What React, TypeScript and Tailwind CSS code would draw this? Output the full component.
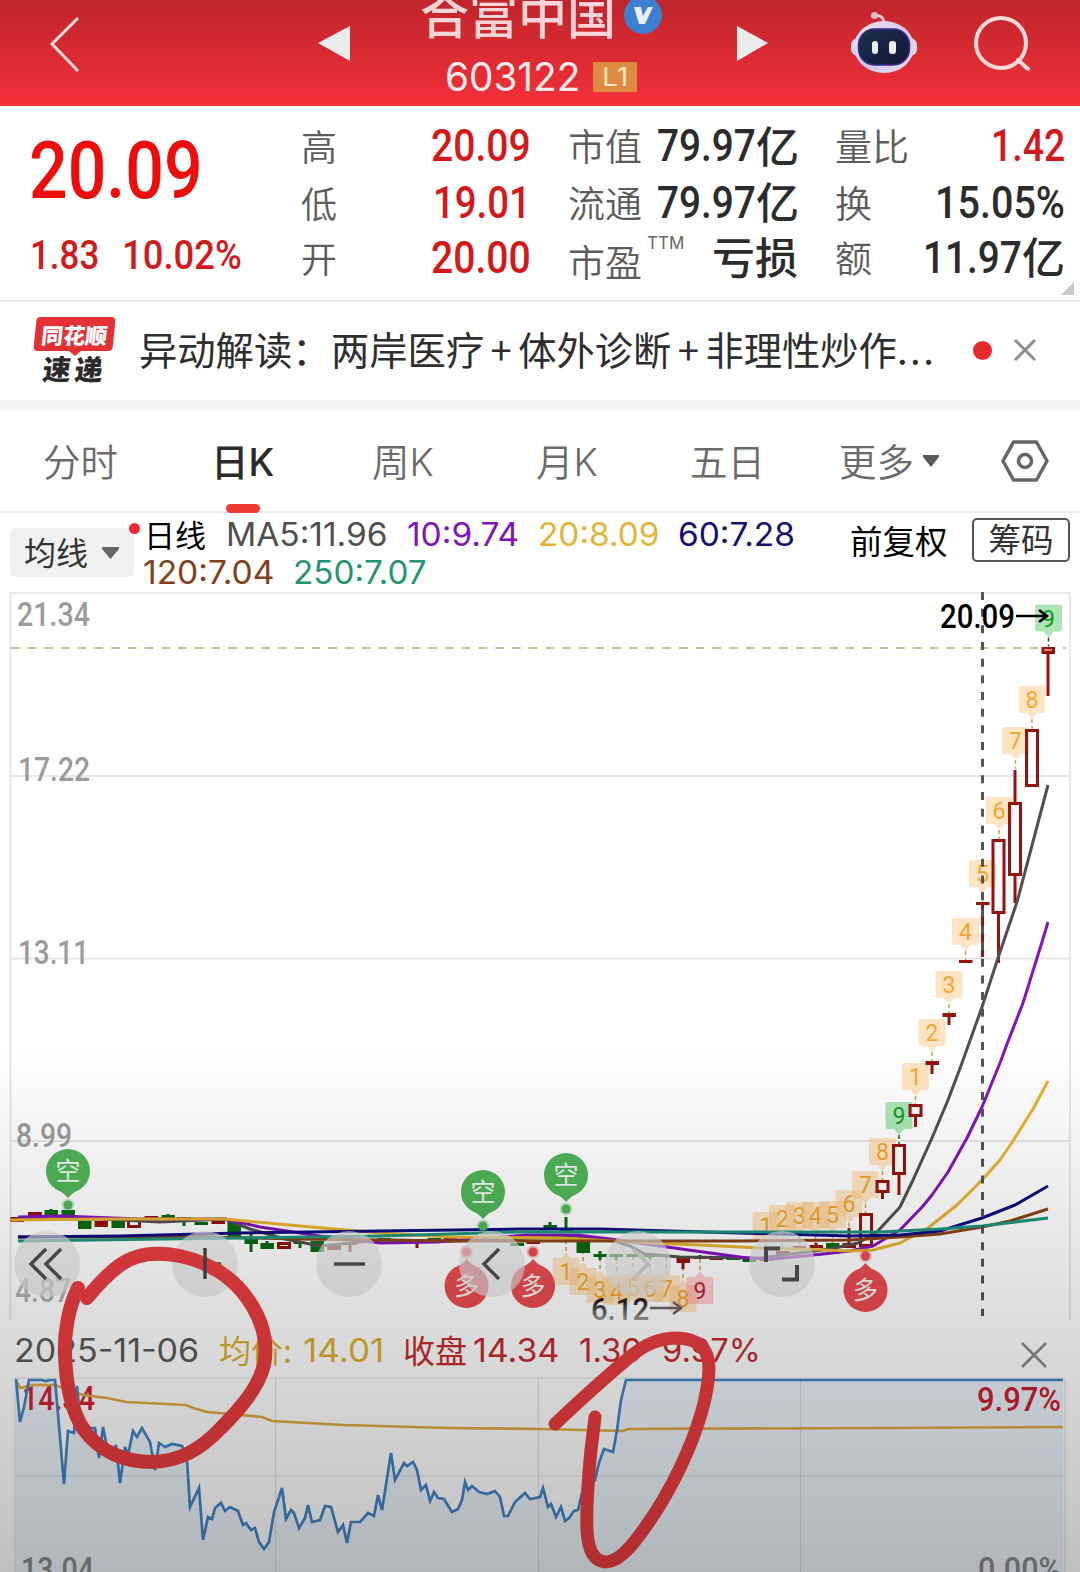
import { useLayoutEffect, useRef, type ReactNode } from "react";

interface FitProps {
  className: string;
  children: ReactNode;
}

// Condenses or stretches its text so that it fills the width of the box
function Fit({ className, children }: FitProps) {
  const box = useRef<HTMLSpanElement>(null);
  const text = useRef<HTMLSpanElement>(null);

  useLayoutEffect(() => {
    if (!box.current || !text.current) return;
    const scale = box.current.clientWidth / text.current.offsetWidth;
    text.current.style.transform = `scaleX(${scale})`;
  }, []);

  return (
    <span ref={box} className={`block shrink-0 whitespace-nowrap ${className}`}>
      <span ref={text} className="inline-block origin-left">
        {children}
      </span>
    </span>
  );
}

const RED = "#96130f";
const GREEN = "#076a10";

function Header() {
  return (
    <header className="flex h-[106px] shrink-0 overflow-hidden bg-linear-to-b from-[#bf252c] to-[#f4303a]">
      <svg className="mt-[16px] ml-[47px] h-[58px] w-[36px] shrink-0" viewBox="0 0 36 58" fill="none" stroke="#fbdcdc" strokeWidth="3">
        <path d="M31 2L5 28l26 27" />
      </svg>
      <svg className="mt-[26px] ml-[235px] h-[35px] w-[33px] shrink-0" viewBox="0 0 33 35" fill="#ececec">
        <path d="M32 0v35L0 17z" />
      </svg>
      <div className="ml-[69px] flex w-[244px] shrink-0 flex-col">
        <div className="flex h-[58px]">
          <Fit className="-mt-[13px] h-[52px] w-[196px] text-[49px] leading-[52px] font-medium text-[#f9d3d6]">合富中国</Fit>
          <svg className="-mt-[5px] ml-[7px] h-[40px] w-[40px]" viewBox="0 0 40 40">
            <circle cx="20" cy="20" r="19" fill="#3e7fd2" />
            <path d="M11 12h7l2 9 5-9h5l-8 17h-6z" fill="#e9efe9" />
          </svg>
        </div>
        <div className="ml-[25px] flex items-center">
          <Fit className="h-[38px] w-[135px] font-['Inter'] text-[39px] leading-[38px] text-[#fdebec]">603122</Fit>
          <div className="ml-[13px] flex h-[30px] w-[44px] items-center justify-center bg-[#de8b40]">
            <Fit className="h-[26px] w-[26px] font-['Inter'] text-[25px] leading-[27px] text-[#f8e6c8]">L1</Fit>
          </div>
        </div>
      </div>
      <svg className="mt-[26px] ml-[73px] h-[35px] w-[32px] shrink-0" viewBox="0 0 32 35" fill="#ececec">
        <path d="M0 0v35l31-18z" />
      </svg>
      <svg className="mt-[10px] ml-[80px] h-[64px] w-[70px] shrink-0" viewBox="0 0 70 64">
        <defs>
          <linearGradient id="robot" x1="0" y1="0" x2="1" y2="1">
            <stop offset="0" stopColor="#f1e6ec" />
            <stop offset="0.55" stopColor="#d4c6ee" />
            <stop offset="1" stopColor="#efdcf3" />
          </linearGradient>
          <linearGradient id="visor" x1="0" y1="0" x2="1" y2="1">
            <stop offset="0" stopColor="#1d2f50" />
            <stop offset="1" stopColor="#141737" />
          </linearGradient>
        </defs>
        <path d="M25 5.500q10-1 10 8" fill="none" stroke="#f0c6ce" strokeWidth="3" />
        <circle cx="25.500" cy="5.500" r="3.500" fill="#f3b9c3" />
        <rect x="2" y="28" width="66" height="18" rx="7" fill="#efd9e6" />
        <ellipse cx="35" cy="37" rx="30" ry="26" fill="url(#robot)" />
        <rect x="9.500" y="19" width="51" height="36" rx="16" fill="url(#visor)" stroke="#3a2a8c" strokeWidth="1.500" />
        <rect x="23" y="31" width="6" height="13" rx="3" fill="#eceff5" />
        <rect x="40" y="31" width="7" height="13" rx="3" fill="#eceff5" />
      </svg>
      <svg className="mt-[14px] ml-[52px] h-[60px] w-[60px] shrink-0" viewBox="0 0 60 60" fill="none" stroke="#fbd9da" strokeWidth="4" strokeLinecap="round">
        <circle cx="30" cy="29" r="25" />
        <path d="M47 46l10 9" />
      </svg>
    </header>
  );
}

function Quote() {
  return (
    <section className="flex h-[194px] shrink-0 bg-white font-['Roboto','Noto_Sans_CJK_SC',sans-serif] font-medium">
      <div className="w-[301px] shrink-0 pl-[29px] text-[#ee0d0d]">
        <Fit className="mt-[25px] h-[80px] w-[174px] text-[79px] leading-[80px]">20.09</Fit>
        <div className="mt-[17px] flex text-[#d01a1c]">
          <Fit className="ml-px h-[54px] w-[69px] text-[41px] leading-[55px]">1.83</Fit>
          <Fit className="ml-[23px] h-[54px] w-[120px] text-[41px] leading-[55px]">10.02%</Fit>
        </div>
      </div>
      <div className="flex w-[230px] shrink-0 flex-col pt-[12px] text-[45px] text-[#d2191b]">
        <div className="flex h-[57px] items-center justify-between">
          <span className="mt-[5px] text-[36px] font-[350] text-[#5c5c5c]">高</span>
          <Fit className="h-[57px] w-[100px] leading-[56px]">20.09</Fit>
        </div>
        <div className="flex h-[57px] items-center justify-between">
          <span className="mt-[5px] text-[36px] font-[350] text-[#5c5c5c]">低</span>
          <Fit className="h-[57px] w-[98px] leading-[55px]">19.01</Fit>
        </div>
        <div className="flex h-[55px] items-center justify-between">
          <span className="mt-[3px] text-[36px] font-[350] text-[#5c5c5c]">开</span>
          <Fit className="h-[55px] w-[100px] leading-[52px]">20.00</Fit>
        </div>
      </div>
      <div className="ml-[37px] flex w-[232px] shrink-0 flex-col pt-[12px] text-[45px] text-[#2c2c2c]">
        <div className="flex h-[57px] items-center">
          <span className="mt-[5px] text-[37px] font-[350] text-[#5c5c5c]">市值</span>
          <Fit className="ml-[15px] h-[57px] w-[99px] leading-[56px]">79.97</Fit>
          <span className="mt-[3px] text-[43px]">亿</span>
        </div>
        <div className="flex h-[57px] items-center">
          <span className="mt-[5px] text-[37px] font-[350] text-[#5c5c5c]">流通</span>
          <Fit className="ml-[15px] h-[57px] w-[99px] leading-[55px]">79.97</Fit>
          <span className="mt-[2px] text-[43px]">亿</span>
        </div>
        <div className="flex h-[55px] items-center">
          <span className="mt-[11px] text-[37px] font-[350] text-[#5c5c5c]">市盈</span>
          <Fit className="-mt-[34px] ml-[5px] h-[18px] w-[37px] font-['Inter'] text-[17px] leading-[18px] font-normal text-[#666]">TTM</Fit>
          <span className="ml-[28px] text-[43px]">亏损</span>
        </div>
      </div>
      <div className="ml-[35px] flex w-[230px] shrink-0 flex-col pt-[12px] text-[45px] text-[#2c2c2c]">
        <div className="flex h-[57px] items-center justify-between">
          <span className="mt-[5px] text-[37px] font-[350] text-[#5c5c5c]">量比</span>
          <Fit className="h-[57px] w-[74px] leading-[56px] text-[#d2191b]">1.42</Fit>
        </div>
        <div className="flex h-[57px] items-center justify-between">
          <span className="mt-[5px] text-[37px] font-[350] text-[#5c5c5c]">换</span>
          <Fit className="h-[57px] w-[130px] leading-[55px]">15.05%</Fit>
        </div>
        <div className="flex h-[55px] items-center">
          <span className="mt-[3px] text-[37px] font-[350] text-[#5c5c5c]">额</span>
          <Fit className="ml-[51px] h-[55px] w-[99px] leading-[52px]">11.97</Fit>
          <span className="text-[43px]">亿</span>
        </div>
      </div>
      <svg className="-ml-[4px] mb-[4px] h-[14px] w-[14px] shrink-0 self-end" viewBox="0 0 14 14">
        <path d="M13 0v13H0z" fill="#c9c9c9" />
      </svg>
    </section>
  );
}

function News() {
  return (
    <section className="flex h-[111px] shrink-0 items-start border-t-2 border-b-11 border-t-[#ececec] border-b-[#f4f4f4] bg-white">
      <div className="mt-[15px] ml-[35px] flex w-[82px] shrink-0 flex-col">
        <div className="flex h-[34px] w-[79px] -skew-x-6 items-center justify-center rounded-[4px] bg-[#e43136]">
          <span className="text-[22px] leading-none font-black text-white">同花顺</span>
        </div>
        <svg className="ml-[34px] h-[5px] w-[12px]" viewBox="0 0 12 5" fill="#e43136">
          <path d="M0 0h12L6 5z" />
        </svg>
        <span className="ml-[8px] -skew-x-6 text-[28px] leading-[24px] font-black tracking-[4px] text-[#2b2b2b]">速递</span>
      </div>
      <div className="mt-[19px] ml-[22px] flex w-[821px] shrink-0 text-[38.3px] leading-[56px] text-[#2e2e2e]">
        <span className="w-[192px]">异动解读：</span>
        <span>两岸医疗</span>
        <span className="w-[34px] text-center">+</span>
        <span>体外诊断</span>
        <span className="w-[34px] text-center">+</span>
        <span>非理性炒作</span>
        <span className="tracking-[2.500px]">...</span>
      </div>
      <span className="mt-[39px] ml-[13px] h-[19px] w-[19px] shrink-0 rounded-full bg-[#e82a2c]" />
      <svg className="mt-[36px] ml-[21px] h-[24px] w-[24px] shrink-0" viewBox="0 0 24 24" stroke="#8c8c8c" strokeWidth="3">
        <path d="M2 2l20 20M22 2L2 22" />
      </svg>
    </section>
  );
}

function Tabs() {
  return (
    <nav className="flex h-[102px] shrink-0 items-start border-b-2 border-[#ececec] bg-white text-[37.500px] leading-[54px] text-[#6a6a6a] [&>*]:shrink-0">
      <span className="mt-[22px] ml-[43px] w-[168px] font-[350]">分时</span>
      <div className="mt-[22px] w-[161px] font-medium text-[#2b2b2b]">
        日<span className="font-['Inter','Noto_Sans_CJK_SC']">K</span>
        <div className="mt-[14px] ml-[15px] h-[9px] w-[34px] rounded-full bg-[#ef3a33]" />
      </div>
      <span className="mt-[22px] w-[164px] font-[350]">周<span className="font-['Inter']">K</span></span>
      <span className="mt-[22px] w-[154px] font-[350]">月<span className="font-['Inter']">K</span></span>
      <span className="mt-[22px] w-[149px] font-[350]">五日</span>
      <span className="mt-[22px] w-[83px] font-[350]">更多</span>
      <svg className="mt-[43px] h-[13px] w-[18px]" viewBox="0 0 18 13" fill="#595959">
        <path d="M1 1h16v2L9 13 1 3z" />
      </svg>
      <svg className="mt-[28px] ml-[60px] h-[44px] w-[50px]" viewBox="0 0 50 44" fill="none" stroke="#666" strokeWidth="3.500" strokeLinejoin="round">
        <path d="M13.500 3h23L47 22 36.500 41h-23L3 22z" />
        <circle cx="25" cy="22" r="6.500" />
      </svg>
    </nav>
  );
}

function Averages() {
  return (
    <section className="flex h-[79px] shrink-0 items-start bg-white [&>*]:shrink-0">
      <div className="relative mt-[15px] ml-[10px] flex h-[49px] w-[124px] items-center rounded-[5px] bg-[#f1f1f1] pb-[3px] pl-[14px] text-[32px] text-[#333]">
        均线
        <svg className="mt-[3px] ml-[14px] h-[12px] w-[17px]" viewBox="0 0 17 12" fill="#666">
          <path d="M0 0h17v2L8.500 12 0 2z" />
        </svg>
        <span className="absolute -top-[5px] -right-[6px] h-[11px] w-[11px] rounded-full bg-[#ee2836]" />
      </div>
      <div className="ml-[9px] w-[706px] font-['Inter'] text-[32px]">
        <div className="flex h-[40px] pt-[2px] leading-[39px]">
          <span className="ml-[1px] font-['Noto_Sans_CJK_SC'] text-[31px] leading-[37px] text-black">日线</span>
          <Fit className="ml-[20px] w-[161px] text-[#4f4f4f]">MA5:11.96</Fit>
          <Fit className="ml-[20px] w-[112px] text-[#7f14b8]">10:9.74</Fit>
          <Fit className="ml-[19px] w-[121px] text-[#e3b33a]">20:8.09</Fit>
          <Fit className="ml-[19px] w-[117px] text-[#14106e]">60:7.28</Fit>
        </div>
        <div className="flex leading-[39px]">
          <Fit className="w-[131px] text-[#80401a]">120:7.04</Fit>
          <Fit className="ml-[19px] w-[134px] text-[#269373]">250:7.07</Fit>
        </div>
      </div>
      <span className="mt-[3px] ml-[1px] w-[122px] text-[32.500px] leading-[47px] text-black">前复权</span>
      <div className="mt-[5px] flex h-[44px] w-[98px] items-center justify-center rounded-[5px] border-2 border-[#555] pb-[3px] text-[32.500px] text-[#333]">筹码</div>
    </section>
  );
}

// [center x, top y, label, kind]
const tags: [number, number, string, string][] = [
  [766, 1212, "1", "o"], [782.5, 1205, "2", "o"], [799.5, 1202, "3", "o"], [815.5, 1202, "4", "o"],
  [832.5, 1201, "5", "o"], [849, 1190, "6", "o"], [865.5, 1171, "7", "o"], [882.5, 1138, "8", "o"],
  [899, 1102, "9", "g"], [915.5, 1063, "1", "o"], [932, 1019, "2", "o"], [949, 971, "3", "o"],
  [965.5, 918, "4", "o"], [982.5, 860, "5", "o"], [999, 797, "6", "o"], [1015.5, 727, "7", "o"],
  [1032, 686, "8", "o"], [1048.5, 604.5, "9", "g"],
];

const lowTags: [number, number, string, string][] = [
  [566, 1258, "1", "o"], [583, 1268, "2", "o"], [600, 1276, "3", "o"], [616.5, 1278, "4", "o"],
  [633, 1274, "5", "o"], [650, 1275, "6", "o"], [666.5, 1275, "7", "o"], [683, 1285, "8", "o"],
  [700, 1277, "9", "r"],
];

const tagFill: Record<string, string> = { o: "#ffc47c", g: "#4cc75f", r: "#ff8f96" };
const tagText: Record<string, string> = { o: "#f3a62e", g: "#109a1e", r: "#c31f3c" };

function Tag({ tag, up }: { tag: [number, number, string, string]; up?: boolean }) {
  const [x, y, label, kind] = tag;
  const tip = up
    ? `M${x - 5} ${y}L${x} ${y - 6}L${x + 5} ${y}z`
    : `M${x - 5} ${y + 27}L${x} ${y + 33}L${x + 5} ${y + 27}z`;
  return (
    <g>
      <g fill={tagFill[kind]} fillOpacity={0.46}>
        <rect x={x - 13.5} y={y} width="27" height="27" rx="2" />
        <path d={tip} />
      </g>
      <path
        d={up ? `M${x} ${y - 7}v-14` : `M${x} ${y + 33}v9`}
        stroke={kind === "g" ? GREEN : "#cf9c55"}
        strokeWidth="1.5"
        strokeDasharray="4 3"
      />
      <text x={x} y={y + 22} textAnchor="middle" fontSize="23" fontFamily="Roboto" fill={tagText[kind]}>
        {label}
      </text>
    </g>
  );
}

// [center x, body top, body bottom, wick top, wick bottom, kind] - h is a hollow rising body
const candles: [number, number, number, number, number, string][] = [
  [17, 1217, 1222, 1217, 1222, "r"], [35, 1212, 1218, 1212, 1218, "h"], [51, 1210, 1217, 1209, 1217, "g"],
  [68, 1210, 1218, 1210, 1218, "g"], [84.5, 1221, 1229, 1221, 1229, "g"], [101, 1221, 1227, 1221, 1227, "r"],
  [118, 1221, 1228, 1221, 1228, "g"], [134, 1218, 1228, 1218, 1228, "h"], [151, 1216, 1219, 1216, 1219, "r"],
  [168, 1215, 1218, 1214, 1218, "g"], [184, 1217, 1219, 1217, 1226, "g"], [201, 1222, 1225, 1222, 1225, "g"],
  [218, 1221, 1224, 1221, 1224, "r"], [234, 1219, 1237, 1219, 1237, "g"], [251, 1239, 1244, 1233, 1252, "g"],
  [267, 1243, 1249, 1241, 1249, "g"], [284, 1242, 1249, 1242, 1249, "h"], [300, 1242, 1244, 1242, 1248, "g"],
  [317, 1241, 1252, 1241, 1252, "g"], [334, 1244, 1250, 1244, 1250, "h"], [350, 1243, 1245, 1243, 1252, "r"],
  [384, 1238, 1241, 1238, 1241, "g"], [417, 1239, 1241, 1239, 1248, "r"], [434, 1238, 1241, 1238, 1241, "g"],
  [450, 1237, 1241, 1237, 1241, "r"], [467, 1239, 1242, 1239, 1242, "g"], [517, 1243, 1246, 1243, 1246, "g"],
  [533, 1240, 1244, 1240, 1244, "r"], [550, 1225, 1229, 1222, 1229, "g"], [566, 1229, 1231, 1217, 1231, "g"],
  [583, 1236, 1253, 1236, 1253, "g"], [600, 1254, 1257, 1251, 1260, "g"], [616, 1254, 1257, 1254, 1260, "g"],
  [633, 1254, 1257, 1254, 1257, "g"], [650, 1254, 1257, 1254, 1259, "g"], [666, 1255, 1257, 1255, 1257, "r"],
  [683, 1257, 1263, 1257, 1269, "r"], [700, 1256, 1259, 1255, 1259, "g"], [716, 1258, 1260, 1258, 1260, "r"],
  [733, 1258, 1260, 1258, 1260, "g"], [749, 1259, 1262, 1259, 1262, "g"], [766, 1257, 1261, 1257, 1261, "r"],
  [783, 1251, 1255, 1251, 1255, "h"], [799, 1246, 1249, 1246, 1249, "r"], [816, 1245, 1248, 1243, 1248, "r"],
  [832.5, 1243, 1248, 1243, 1248, "g"], [849, 1243, 1248, 1228, 1248, "r"], [866, 1213, 1247, 1213, 1247, "h"],
  [882.5, 1180, 1193, 1180, 1199, "h"], [899, 1144, 1175, 1144, 1195, "h"], [915.5, 1104, 1117, 1104, 1127, "h"],
  [932, 1061, 1065, 1061, 1074, "r"], [949, 1013, 1017, 1013, 1025, "r"], [965.5, 960, 963, 960, 963, "r"],
  [982.5, 902, 905, 902, 957, "r"], [998.5, 839, 914, 839, 963, "h"], [1015, 802, 876, 770, 903, "h"],
  [1032, 729, 787, 729, 787, "h"], [1048, 647, 654, 647, 696, "r"],
];

function Candle({ data }: { data: (typeof candles)[number] }) {
  const [x, top, bottom, high, low, kind] = data;
  const color = kind === "g" ? GREEN : RED;
  return (
    <g stroke={color} strokeWidth="3">
      <path d={`M${x} ${high}V${top}M${x} ${bottom}V${low}`} />
      {kind === "h" ? (
        <rect x={x - 5.5} y={top + 1.5} width="11" height={bottom - top - 3} fill="none" />
      ) : (
        <rect x={x - 6.5} y={top} width="13.5" height={bottom - top} fill={color} stroke="none" />
      )}
    </g>
  );
}

function Pin({ x, y, label, color, down }: { x: number; y: number; label: string; color: string; down?: boolean }) {
  const dir = down ? 1 : -1;
  return (
    <g fill={color}>
      <circle cx={x} cy={y + dir * 34} r="6.500" opacity="0.3" />
      <circle cx={x} cy={y + dir * 34} r="4.500" />
      <circle cx={x} cy={y} r="22" />
      <path d={`M${x - 14} ${y + dir * 16}Q${x - 4} ${y + dir * 22} ${x} ${y + dir * 27}Q${x + 4} ${y + dir * 22} ${x + 14} ${y + dir * 16}z`} />
      <text x={x} y={y + 9} textAnchor="middle" fontSize="25" fill="#f3f3f3">{label}</text>
    </g>
  );
}

const scale: [number, number, number, string][] = [
  [17, 626, 73, "21.34"],
  [18, 781, 72, "17.22"],
  [18, 964, 71, "13.11"],
  [16, 1147, 56, "8.99"],
  [15, 1302, 56, "4.87"],
];

function KChart() {
  return (
    <svg className="block h-[729px] w-[1080px] shrink-0 bg-white font-['Noto_Sans_CJK_SC',sans-serif]" viewBox="0 592 1080 729">
      <defs>
        <linearGradient id="fade" x1="0" y1="0" x2="0" y2="1">
          <stop offset="0.3" stopColor="#222" />
          <stop offset="0.85" stopColor="#aaa" />
        </linearGradient>
      </defs>
      <g fill="none" stroke="#e8e8e8" strokeWidth="2">
        <path d="M10.500 1320V593H1070V1320M11 776H1070M11 958.500H1070M11 1141H1070" />
      </g>
      <path d="M11 648H1066" stroke="#cdbf92" strokeWidth="2" strokeDasharray="8.700 8" fill="none" />
      {scale.map(([x, y, w, label]) => (
        <text key={label} x={x} y={y} textLength={w} lengthAdjust="spacingAndGlyphs" fontFamily="Roboto" fontWeight="500" fontSize="33" fill="#9c9c9c" fillOpacity={label === "4.87" ? 0.8 : 1}>
          {label}
        </text>
      ))}

      {tags.map((tag) => <Tag key={tag[0]} tag={tag} />)}
      {lowTags.map((tag) => <Tag key={tag[0]} tag={tag} up />)}
      {candles.map((c) => <Candle key={c[0]} data={c} />)}
      <path d="M1044 650h8" stroke="#f0b0a8" strokeWidth="1.500" />

      <g fill="none" strokeWidth="3" strokeLinejoin="round">
        <path stroke="#505050" d="M18 1219L100 1219L160 1222L225 1219L250 1229L285 1239L320 1246L380 1240L450 1241L530 1238L580 1236L612 1240L630 1246L645 1254L680 1257L760 1258L830 1249L858 1243L877 1232L900 1207L913 1180L932 1138L948 1100L962 1063L982 1007L998 958L1017 902L1048 785" />
        <path stroke="#8413bd" d="M18 1217L60 1216L140 1219L225 1219L260 1227L320 1236L380 1243L437 1242L527 1235L577 1235L610 1239L667 1247L703 1252L747 1258L773 1259L823 1254L850 1251L873 1246L900 1230L923 1206L932 1195L948 1172L967 1138L982 1107L1000 1063L1007 1044L1023 1003L1042 942L1048 922" />
        <path stroke="#e7b32e" d="M11 1220L100 1219L225 1219L300 1226L380 1233L450 1237L560 1238L650 1243L700 1245L760 1248L823 1250L850 1251L873 1250L900 1243L928 1228L957 1205L982 1180L1000 1160L1013 1141L1033 1109L1048 1081" />
        <path stroke="#8a4319" d="M18 1237L200 1237L300 1239L380 1240L450 1241L740 1241L850 1240L900 1237L940 1234L982 1227L1010 1221L1048 1209" />
        <path stroke="#100d80" d="M18 1237L120 1236L240 1233L380 1231L520 1229L600 1229L740 1233L850 1236L900 1235L940 1231L982 1218L1015 1205L1048 1186" />
        <path stroke="#1f947d" d="M18 1241L240 1238L380 1236L520 1232L740 1232L880 1232L940 1229L982 1226L1048 1218" />
      </g>

      <Pin x={68} y={1171} label="空" color="#4fb557" down />
      <Pin x={483} y={1192} label="空" color="#4fb557" down />
      <Pin x={566} y={1175} label="空" color="#4fb557" down />
      <Pin x={466.5} y={1286} label="多" color="#ea4b50" />
      <Pin x={533} y={1286} label="多" color="#ea4b50" />
      <Pin x={865.5} y={1290} label="多" color="#ea4b50" />

      <path d="M982.500 592V1316" stroke="#555" strokeWidth="3" strokeDasharray="8 8.670" fill="none" />
      <text x="940" y="628" textLength="75" lengthAdjust="spacingAndGlyphs" fontFamily="Roboto" fontWeight="500" fontSize="33" fill="#000">20.09</text>
      <path d="M1016 616h30M1039 610l8 6-8 6" stroke="#000" strokeWidth="2.500" fill="none" />
      <text x="591" y="1320" textLength="58" lengthAdjust="spacingAndGlyphs" fontFamily="Roboto" fontWeight="500" fontSize="32" fill="url(#fade)">6.12</text>
      <path d="M650 1308h30M673 1302l8 6-8 6" stroke="#666" strokeWidth="2.500" fill="none" />

      <g fill="#e0e0e0" fillOpacity="0.66">
        <circle cx="47" cy="1264" r="33" />
        <circle cx="205" cy="1264" r="33" />
        <circle cx="349" cy="1264" r="33" />
        <circle cx="492" cy="1264" r="33" />
        <circle cx="638" cy="1264" r="33" />
        <circle cx="782" cy="1264" r="33" />
      </g>
      <g fill="none" stroke="#505050" strokeWidth="3.500">
        <path d="M46 1249L31 1264L46 1279M61 1249L46 1264L61 1279" />
        <path d="M190 1264h31M334 1264h31" />
        <path d="M499 1249L484 1264L499 1279" />
        <path d="M633 1249L648 1264L633 1279" stroke="#cfcfcf" />
        <path d="M766 1262V1248.500H780M782 1279.500H797V1265" strokeWidth="4" />
      </g>
    </svg>
  );
}

function DetailBar() {
  return (
    <section className="flex h-[56px] shrink-0 bg-white font-['Inter'] text-[32px] leading-[60px] [&>*]:shrink-0">
      <Fit className="ml-[14px] w-[185px] text-[#5b5b5b]">2025-11-06</Fit>
      <span className="ml-[20px] w-[84px] font-['Noto_Sans_CJK_SC'] text-[32px] leading-[56px] text-[#deb02f]">均价:</span>
      <Fit className="w-[81px] text-[#deb02f]">14.01</Fit>
      <span className="ml-[19px] w-[70px] font-['Noto_Sans_CJK_SC'] text-[32px] leading-[56px] text-[#c52c30]">收盘</span>
      <Fit className="w-[86px] text-[#c52c30]">14.34</Fit>
      <Fit className="ml-[20px] w-[63px] text-[#c52c30]">1.30</Fit>
      <Fit className="ml-[20px] w-[99px] text-[#c52c30]">9.97%</Fit>
      <svg className="mt-[20px] ml-[259px] h-[28px] w-[28px]" viewBox="0 0 28 28" stroke="#8a8a8a" strokeWidth="2.500">
        <path d="M2 2l24 24M26 2L2 26" />
      </svg>
    </section>
  );
}

const priceLine =
  "16,1379 20,1422 24,1407 29,1380 42,1380 46,1381 50,1380 55,1380 64,1484 68,1431 74,1433 77,1386 80,1417 90,1428 95,1428 99,1458 103,1427 107,1447 112,1457 116,1445 120,1483 125,1447 128,1455 133,1431 137,1437 142,1428 150,1442 155,1470 159,1443 165,1447 172,1444 182,1446 187,1460 190,1507 199,1488 203,1540 208,1517 212,1519 215,1508 221,1503 225,1511 230,1507 238,1511 243,1525 246,1523 251,1530 255,1528 259,1542 264,1549 269,1542 274,1512 282,1488 286,1519 291,1510 294,1513 299,1528 305,1518 308,1505 312,1522 320,1520 325,1506 331,1507 338,1532 343,1525 347,1543 351,1522 360,1522 368,1513 374,1516 378,1495 382,1510 391,1453 395,1480 404,1463 407,1466 413,1462 417,1470 421,1490 426,1485 430,1501 434,1492 438,1498 444,1499 452,1512 458,1509 462,1500 465,1482 468,1490 472,1486 479,1492 487,1494 495,1491 500,1497 504,1516 508,1516 515,1502 525,1493 530,1499 540,1497 543,1488 548,1507 551,1504 556,1517 561,1507 565,1521 569,1518 574,1511 578,1510 582,1493 595,1480 599,1463 604,1449 613,1452 617,1430 621,1400 626,1380 1063,1380";

const averageLine =
  "17,1382 20,1388 34,1385 55,1385 83,1395 107,1398 126,1402 186,1405 193,1408 207,1412 262,1417 272,1421 344,1425 448,1428 540,1429 623,1431 628,1429 884,1428 1063,1427";

function Intraday() {
  return (
    <svg className="block h-[195px] w-[1080px] shrink-0 bg-white" viewBox="0 1377 1080 195">
      <polygon points={`${priceLine} 1063,1572 16,1572`} fill="#3f86c8" fillOpacity="0.1" />
      <path d="M15 1572V1378H1065V1572M15 1476H1064M275.500 1378V1572M538.500 1378V1572M800.500 1378V1572" fill="none" stroke="#808080" strokeOpacity="0.24" strokeWidth="1.200" />
      <g fontFamily="Roboto" fontWeight="500" fontSize="33">
        <text x="22" y="1410" textLength="73" lengthAdjust="spacingAndGlyphs" fill="#d32430">14.34</text>
        <text x="977" y="1411" textLength="84" lengthAdjust="spacingAndGlyphs" fill="#cb2030">9.97%</text>
        <text x="21" y="1581" textLength="73" lengthAdjust="spacingAndGlyphs" fill="#8a8a8a">13.04</text>
        <text x="978" y="1581" textLength="83" lengthAdjust="spacingAndGlyphs" fill="#8a8a8a">0.00%</text>
      </g>
      <polyline points={averageLine} fill="none" stroke="#dfa943" strokeWidth="2.700" />
      <polyline points={priceLine} fill="none" stroke="#4385c6" strokeWidth="2.700" />
    </svg>
  );
}

function Scribble() {
  return (
    <svg className="pointer-events-none absolute top-0 left-0 h-[1572px] w-[1080px]" viewBox="0 0 1080 1572" fill="none">
      <g stroke="#ea3d40" strokeLinecap="round" strokeLinejoin="round">
        <path strokeWidth="14" d="M87 1298C95 1288 105 1276 120 1265C135 1254 155 1251 180 1256C212 1263 235 1278 251 1304C263 1323 268 1344 264 1365C258 1388 241 1408 221 1428C200 1450 180 1461 152 1462C125 1462 100 1452 84 1430C72 1412 66 1385 65 1355C64 1335 68 1308 78 1288" />
        <path strokeWidth="13" d="M555 1424C575 1405 600 1382 625 1361C645 1343 660 1338 678 1338C700 1339 709 1350 709 1369C708 1400 697 1432 680 1468C667 1495 650 1522 635 1541C624 1555 614 1562 605 1562C594 1561 588 1550 587 1530C586 1500 589 1470 591 1450L595 1417" />
      </g>
      <path d="M205 1248v31" stroke="#454545" strokeWidth="3.500" />
    </svg>
  );
}

export default function App() {
  return (
    <main className="relative flex h-[1572px] w-[1080px] flex-col overflow-hidden bg-white font-['Noto_Sans_CJK_SC',sans-serif]">
      <Header />
      <Quote />
      <News />
      <Tabs />
      <Averages />
      <KChart />
      <DetailBar />
      <Intraday />
      <Scribble />
      {/* shade that falls over the lower third of the screen */}
      <div className="pointer-events-none absolute inset-x-0 bottom-0 h-[532px] bg-linear-to-b from-black/0 via-black/13 via-50% to-black/25" />
    </main>
  );
}
